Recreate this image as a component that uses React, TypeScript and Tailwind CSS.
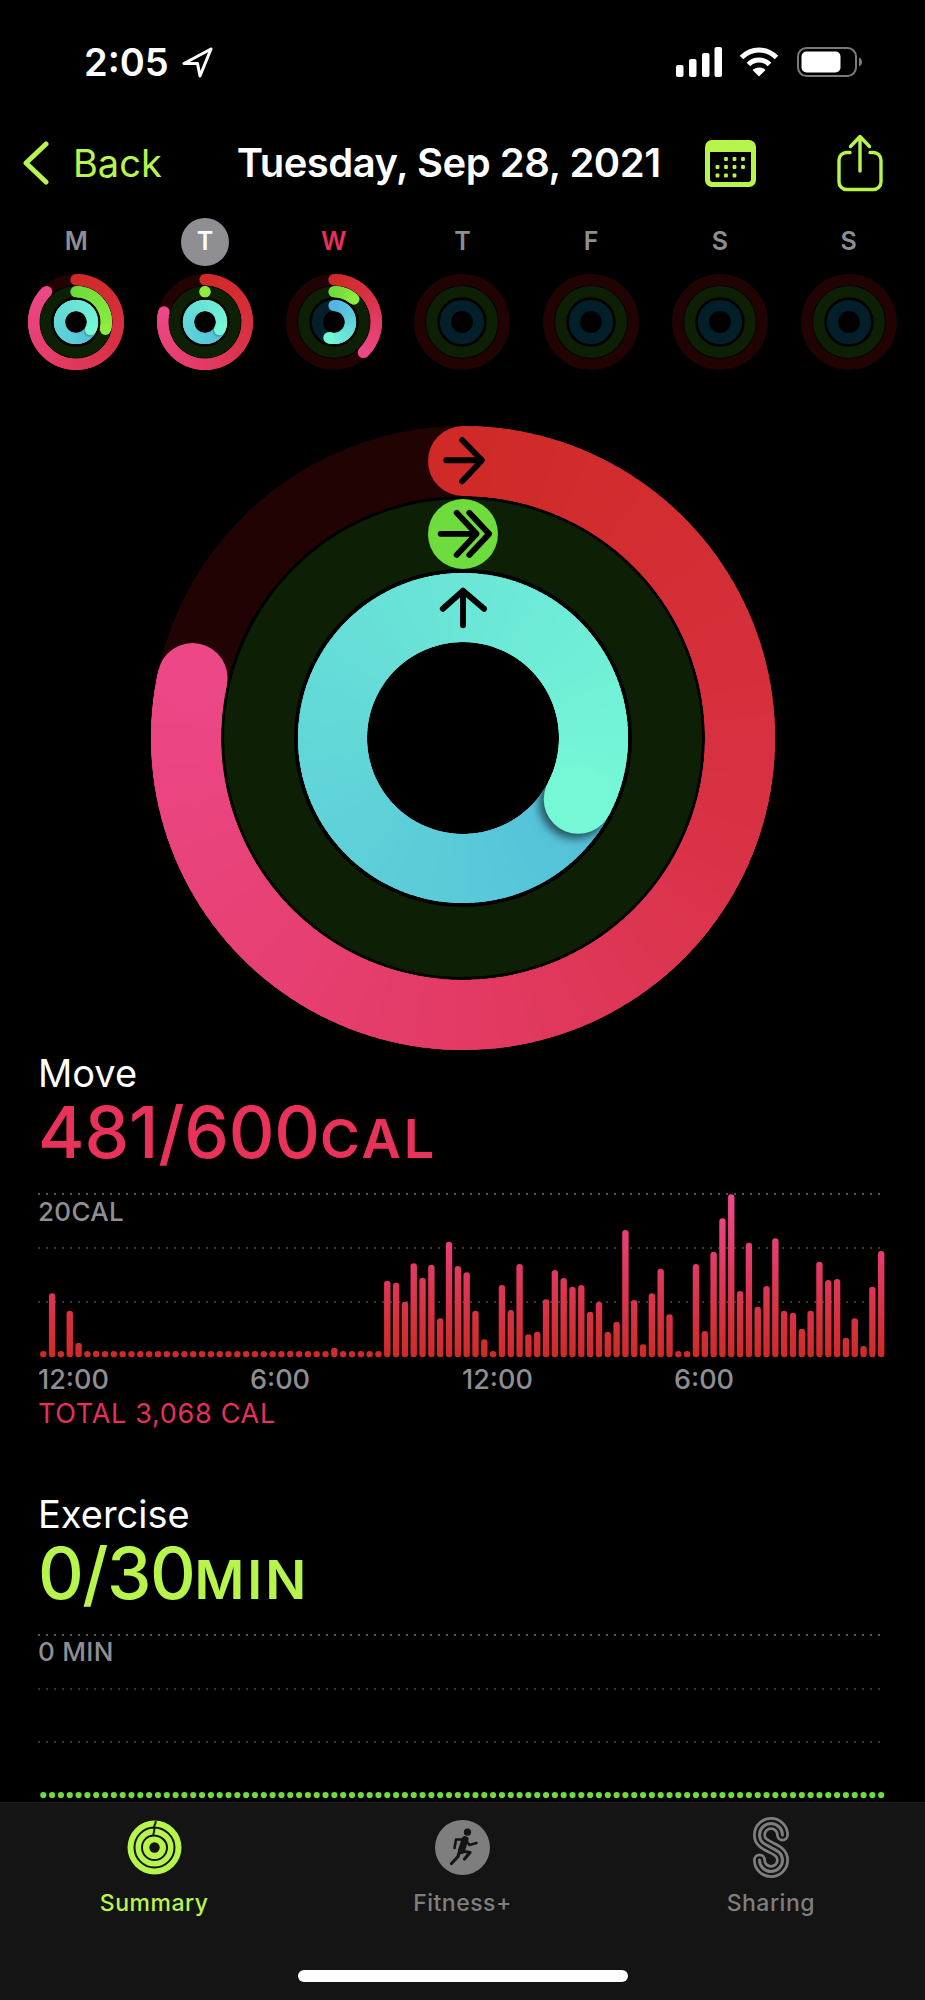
import React from 'react';

type Stop = [number, string];

const RED: Stop[] = [[0, '#cf2a27'], [0.4, '#d93246'], [0.65, '#e33b66'], [1, '#ec4888']];
const GREEN: Stop[] = [[0, '#6fdc3e'], [1, '#8cec40']];
const BLUE: Stop[] = [[0, '#54c0d9'], [1, '#76f8d6']];
const BLUE_SHORT: Stop[] = [[0, '#55b5e0'], [1, '#72f7d6']];

const hex = (c: string) => [1, 3, 5].map(i => parseInt(c.slice(i, i + 2), 16));

const mix = (stops: Stop[], t: number) => {
    for (let i = 1; i < stops.length; i++) {
        if (t <= stops[i][0]) {
            const k = (t - stops[i - 1][0]) / (stops[i][0] - stops[i - 1][0]);
            const a = hex(stops[i - 1][1]);
            const b = hex(stops[i][1]);
            return `rgb(${a.map((v, j) => Math.round(v + (b[j] - v) * k)).join(',')})`;
        }
    }
    return stops[stops.length - 1][1];
};

const polar = (c: number, r: number, deg: number) => {
    const a = ((deg - 90) * Math.PI) / 180;
    return [c + r * Math.cos(a), c + r * Math.sin(a)];
};

const Arc = ({ c, r, w, from, to, stops, shadowId, shadow = 0.6 }: { c: number; r: number; w: number; from: number; to: number; stops: Stop[]; shadowId?: string; shadow?: number }) => {
    const step = 2;
    const parts = [];
    const n = Math.max(1, Math.ceil((to - from) / step));
    for (let i = 0; i < n; i++) {
        const a = from + ((to - from) * i) / n;
        // overlap the next piece by a good margin, thin seams show the track on small rings
        const b = from + ((to - from) * (i + 1)) / n + 3;
        const [x1, y1] = polar(c, r, a);
        const [x2, y2] = polar(c, r, Math.min(b, to));
        parts.push(
            <path key={i} d={`M${x1} ${y1}A${r} ${r} 0 0 1 ${x2} ${y2}`} fill="none" stroke={mix(stops, i / n)} strokeWidth={w} />
        );
    }
    const [sx, sy] = polar(c, r, from);
    const [ex, ey] = polar(c, r, to);
    // the shadow only falls on the first lap, so the tail is painted after it
    const cut = Math.floor(n * 0.7);
    return (
        <g>
            {to - from <= 360 - 1 && <circle cx={sx} cy={sy} r={w / 2} fill={stops[0][1]} />}
            {parts.slice(0, cut)}
            {shadowId && (
                <g mask={`url(#${shadowId}m)`}>
                    <circle cx={ex - w * 0.04} cy={ey + w * 0.05} r={w / 2 + w * 0.02} fill="#000" opacity={shadow} filter={`url(#${shadowId})`} />
                </g>
            )}
            {parts.slice(cut)}
            <circle cx={ex} cy={ey} r={w / 2} fill={stops[stops.length - 1][1]} />
        </g>
    );
};

type RingSpec = { red?: number; green?: number; blue?: [number, number] };

const MiniRings = ({ id, red, green, blue }: RingSpec & { id: string }) => {
    const c = 48;
    const w = 11.2;
    return (
        <svg width={96} height={96} viewBox="0 0 96 96" className="block">
            <defs>
                <filter id={`${id}s`} x="-50%" y="-50%" width="200%" height="200%"><feGaussianBlur stdDeviation="0.8" /></filter>
                <mask id={`${id}sm`} maskUnits="userSpaceOnUse" x="0" y="0" width="96" height="96">
                    <circle cx={c} cy={c} r={16.5} fill="none" stroke="#fff" strokeWidth={w} />
                </mask>
            </defs>
            <circle cx={c} cy={c} r={42.3} fill="none" stroke="#220304" strokeWidth={w} />
            <circle cx={c} cy={c} r={30.3} fill="none" stroke="#0d1f05" strokeWidth={w} />
            <circle cx={c} cy={c} r={16.5} fill="none" stroke="#03202a" strokeWidth={w} />
            {red !== undefined && <Arc c={c} r={42.3} w={w} from={0} to={red} stops={RED} />}
            {green !== undefined && <Arc c={c} r={30.3} w={w} from={0} to={green} stops={GREEN} />}
            {blue && <Arc c={c} r={16.5} w={w} from={blue[0]} to={blue[1]} stops={blue[1] - blue[0] >= 360 ? BLUE : BLUE_SHORT} shadowId={blue[1] - blue[0] >= 360 ? `${id}s` : undefined} shadow={0.35} />}
        </svg>
    );
};

const BigRings = () => {
    const c = 312;
    return (
        <svg width={624} height={624} viewBox="0 0 624 624" className="block mx-auto">
            <defs>
                <filter id="bigs" x="-50%" y="-50%" width="200%" height="200%"><feGaussianBlur stdDeviation="5" /></filter>
                <mask id="bigsm" maskUnits="userSpaceOnUse" x="0" y="0" width="624" height="624">
                    <circle cx={c} cy={c} r={130.5} fill="none" stroke="#fff" strokeWidth={69} />
                </mask>
            </defs>
            <circle cx={c} cy={c} r={277} fill="none" stroke="#220304" strokeWidth={70} />
            <circle cx={c} cy={c} r={204} fill="none" stroke="#0d1f05" strokeWidth={70} />
            <Arc c={c} r={277} w={70} from={0} to={282.5} stops={RED} />
            <circle cx={c} cy={c - 204} r={35} fill="#6fdc3e" />
            <Arc c={c} r={130.5} w={69} from={118} to={478} stops={BLUE} shadowId="bigs" />
            <g transform="translate(312 312) scale(.4209) translate(-790 -780)" fill="none" stroke="#000" strokeWidth="14" strokeLinecap="round" strokeLinejoin="round">
                <path d="M750 120H833M788 72L835 120L788 170" />
                <path d="M737 295H815M775 245L822 295L775 345M805 245L852 295L805 345" />
                <path d="M790 512V430M742 473L790 430L840 473" />
            </g>
        </svg>
    );
};

const CAL_TOPS = [
    483, 310, 483, 362, 458, 483, 482, 483, 483, 483, 483, 483, 483, 483, 483, 483,
    483, 483, 483, 483, 483, 483, 483, 483, 483, 483, 483, 483, 482, 483, 483, 483,
    483, 473, 483, 483, 483, 483, 483, 272, 278, 335, 220, 263, 224, 385, 155, 228,
    247, 362, 448, 483, 285, 360, 222, 433, 425, 328, 240, 264, 290, 285, 365, 335,
    425, 395, 120, 330, 463, 310, 236, 373, 483, 483, 222, 423, 185, 85, 13, 303,
    158, 350, 288, 145, 362, 368, 416, 362, 215, 270, 267, 443, 385, 468, 290, 183,
];

const GridLines = ({ ys }: { ys: number[] }) => (
    <>
        {ys.map((y, i) => (
            <line key={y} x1={1} x2={848} y1={y} y2={y} stroke={i === 0 ? '#6e6e6e' : '#454545'} strokeWidth={2} strokeLinecap="round" strokeDasharray="0.1 7.9" />
        ))}
    </>
);

const MoveChart = () => (
    <svg width={848} height={170} viewBox="0 0 848 170" className="block">
        <defs>
            <linearGradient id="bars" gradientUnits="userSpaceOnUse" x1="0" y1="4" x2="0" y2="167">
                <stop offset="0" stopColor="#ee4a90" />
                <stop offset="0.45" stopColor="#e13a62" />
                <stop offset="1" stopColor="#cf2a27" />
            </linearGradient>
        </defs>
        <GridLines ys={[4, 58, 112]} />
        {CAL_TOPS.map((top, i) => (
            <rect key={i} x={5.3 + 8.82 * i - 3.2} y={top / 3} width={6.4} height={167.3 - top / 3} rx={3.2} fill="url(#bars)" />
        ))}
    </svg>
);

const ExerciseChart = () => (
    <svg width={848} height={171} viewBox="0 0 848 171" className="block">
        <GridLines ys={[4, 58, 111]} />
        {CAL_TOPS.map((_, i) => (
            <circle key={i} cx={5.3 + 8.82 * i} cy={164} r={3.1} fill="#6fdc3e" />
        ))}
    </svg>
);

const StatusIcons = () => (
    <div className="flex items-center">
        <svg width={46} height={30} viewBox="0 0 46 30" fill="#fff">
            <rect x="0" y="18" width="7.5" height="12" rx="2" />
            <rect x="13" y="12" width="7.5" height="18" rx="2" />
            <rect x="26" y="6" width="7.5" height="24" rx="2" />
            <rect x="38.5" y="0" width="7.5" height="30" rx="2" />
        </svg>
        <svg width={40} height={30} viewBox="0 0 40 30" className="ml-[17px]" fill="none" stroke="#fff" strokeWidth="5">
            <path d="M2.5 10.5C12.5 .5 27.5 .5 37.5 10.5" />
            <path d="M9.5 17.5C15 11.5 25 11.5 30.5 17.5" />
            <path d="M20 29.5L13.5 23C17 19.5 23 19.5 26.5 23Z" fill="#fff" stroke="none" />
        </svg>
        <svg width={66} height={30} viewBox="0 0 66 30" className="ml-[18px]">
            <rect x="1" y="1" width="58" height="28" rx="8.5" fill="none" stroke="#7a7a7a" strokeWidth="2" />
            <rect x="4.5" y="4.5" width="39" height="21" rx="5" fill="#fff" />
            <path d="M62 10.5C64 11 65 13 65 15S64 19 62 19.5Z" fill="#7a7a7a" />
        </svg>
    </div>
);

const CalendarIcon = () => (
    <svg width={51} height={47} viewBox="0 0 51 47" fill="#b8f54c">
        <path fillRule="evenodd" d="M7 0H44A7 7 0 0 1 51 7V40A7 7 0 0 1 44 47H7A7 7 0 0 1 0 40V7A7 7 0 0 1 7 0ZM5 12H46V39A3 3 0 0 1 43 42H8A3 3 0 0 1 5 39Z" />
        {[[21, 19], [29.5, 19], [38, 19], [12.5, 27], [21, 27], [29.5, 27], [38, 27], [12.5, 35.5], [21, 35.5], [29.5, 35.5]].map(([x, y]) => (
            <rect key={`${x}-${y}`} x={x - 1.9} y={y - 1.9} width={3.8} height={3.8} rx={0.8} />
        ))}
    </svg>
);

const ShareIcon = () => (
    <svg width={46} height={58} viewBox="0 0 46 58" fill="none" stroke="#b8f54c" strokeWidth="3.4" strokeLinecap="round" strokeLinejoin="round">
        <path d="M13 18.5H9.5A7.5 7.5 0 0 0 2 26V48A7.5 7.5 0 0 0 9.5 55.5H36.5A7.5 7.5 0 0 0 44 48V26A7.5 7.5 0 0 0 36.5 18.5H33" />
        <path d="M23 37V3M13.5 12.5L23 2.5L32.5 12.5" />
    </svg>
);

const SummaryIcon = () => (
    <svg width={55} height={61} viewBox="0 0 55 61">
        <circle cx="27.5" cy="30.5" r="27" fill="#b8f54c" />
        <circle cx="27.5" cy="30.5" r="5.2" fill="#141414" />
        <path d="M28.5 4C29.5 7 26.5 8 27 10.5C38 10.5 47.5 19.5 47.5 30.5C47.5 41.5 38.5 50.5 27.5 50.5C16.5 50.5 7.5 41.5 7.5 30.5C7.5 19.5 16.5 10.5 27 10.5C28.5 13 26 15 26.5 18.5C33.5 18.5 40 23.5 40 30.5C40 37.5 34.5 43 27.5 43C20.5 43 15 37.5 15 30.5C15 23.5 20.5 18.5 26.5 18.5" fill="none" stroke="#141414" strokeWidth="2" />
    </svg>
);

const FitnessIcon = () => (
    <svg width={55} height={61} viewBox="0 0 55 61">
        <circle cx="27.5" cy="30.5" r="27.5" fill="#7e7e7e" />
        <g transform="translate(0 3)" fill="none" stroke="#141414" strokeLinecap="round" strokeLinejoin="round">
            <circle cx="32.5" cy="12.2" r="3.6" fill="#141414" stroke="none" />
            <path d="M30 19.5L26.5 30.5" strokeWidth="7" />
            <path d="M28.5 19.5H21L19.5 28M31 20.5L34.5 25L41.5 23" strokeWidth="2.6" />
            <path d="M26.5 31L35 32.5L29.5 39M25 30L23 36.5L16.5 43.5" strokeWidth="3.2" />
        </g>
    </svg>
);

const SharingIcon = () => {
    const d = 'M29.5 18A11.5 11.5 0 0 0 6.5 18C6.5 25 12 27.5 18 30.5S29.5 36 29.5 43A11.5 11.5 0 0 1 6.5 43';
    return (
        <svg width={36} height={61} viewBox="0 0 36 61" fill="none" strokeLinecap="round">
            <path d={d} stroke="#7e7e7e" strokeWidth="13" />
            <path d={d} stroke="#141414" strokeWidth="7.5" />
            <path d={d} stroke="#7e7e7e" strokeWidth="3" />
        </svg>
    );
};

const DAYS: { label: string; color?: string; today?: boolean; rings: RingSpec }[] = [
    { label: 'M', rings: { red: 316, green: 104, blue: [118, 478] } },
    { label: 'T', today: true, rings: { red: 284, green: 0, blue: [118, 478] } },
    { label: 'W', color: 'text-[#e5305a]', rings: { red: 136, green: 41, blue: [0, 198] } },
    { label: 'T', rings: {} },
    { label: 'F', rings: {} },
    { label: 'S', rings: {} },
    { label: 'S', rings: {} },
];

const App = () => (
    <div className="h-[2000px] bg-black text-white flex flex-col overflow-hidden font-['Inter',sans-serif]">
        <div className="h-[124px] shrink-0 flex items-center justify-between pl-[84px] pr-[62px]">
            <div className="flex items-center gap-[13px]">
                <span className="text-[38px] font-semibold leading-none">2:05</span>
                <svg width={31} height={31} viewBox="0 0 31 31" fill="none" stroke="#fff" strokeWidth="3" strokeLinejoin="round">
                    <path d="M29 2L2 16.5H15.5L18 29Z" />
                </svg>
            </div>
            <StatusIcons />
        </div>

        <div className="h-[94px] shrink-0 pb-[16px] flex items-center pl-[23px] pr-[42px]">
            <svg width={26} height={44} viewBox="0 0 26 44" fill="none" stroke="#b8f54c" strokeWidth="5" strokeLinecap="round" strokeLinejoin="round">
                <path d="M23 3L3 22L23 41" />
            </svg>
            <span className="ml-[24px] text-[38px] leading-none text-[#b8f54c]">Back</span>
            <span className="ml-[75px] text-[40px] font-semibold leading-none tracking-[-0.5px] whitespace-nowrap">Tuesday, Sep 28, 2021</span>
            <div className="ml-auto flex items-center gap-[81px]">
                <CalendarIcon />
                <ShareIcon />
            </div>
        </div>

        <div className="shrink-0 grid grid-cols-7 px-[12px]">
            {DAYS.map((day, i) => (
                <div key={i} className="flex flex-col items-center">
                    <div className={`w-[48px] h-[48px] rounded-full flex items-center justify-center text-[25px] font-semibold ${day.today ? 'bg-[#8e8e93] text-white' : day.color || 'text-[#8e8e93]'}`}>
                        {day.label}
                    </div>
                    <div className="mt-[8px]">
                        <MiniRings id={`ring${i}`} {...day.rings} />
                    </div>
                </div>
            ))}
        </div>

        <div className="shrink-0 mt-[56px]">
            <BigRings />
        </div>

        <div className="shrink-0 pl-[38px]">
            <div className="h-[46px] flex items-center text-[38px] leading-none">Move</div>
            <div className="h-[72px] flex items-baseline text-[#e8325a] font-medium leading-[72px]">
                <span className="text-[71px] tracking-[-0.2px]">481/600</span>
                <span className="text-[54px] font-semibold tracking-[3px]">CAL</span>
            </div>
            <div className="relative mt-[22px]">
                <MoveChart />
                <span className="absolute left-0 top-[9px] text-[26px] leading-[26px] font-medium tracking-[0.3px] text-[#8e8e93]">20CAL</span>
            </div>
            <div className="w-[848px] grid grid-cols-4 h-[38px] items-center text-[27px] font-medium text-[#8e8e93]">
                <span>12:00</span>
                <span>6:00</span>
                <span>12:00</span>
                <span>6:00</span>
            </div>
            <div className="h-[32px] flex items-center text-[27px] text-[#e5305a] tracking-[0.7px]">TOTAL 3,068 CAL</div>

            <div className="mt-[61px] h-[46px] flex items-center text-[38px] leading-none">Exercise</div>
            <div className="h-[72px] flex items-baseline text-[#b8f54c] font-medium leading-[72px]">
                <span className="text-[71px] tracking-[-1.5px]">0/30</span>
                <span className="text-[54px] font-semibold tracking-[3px]">MIN</span>
            </div>
            <div className="relative mt-[22px]">
                <ExerciseChart />
                <span className="absolute left-0 top-[8px] text-[26px] leading-[26px] font-medium tracking-[0.3px] text-[#8e8e93]">0 MIN</span>
            </div>
        </div>

        <div className="flex-1 bg-[#141414] border-t border-[#1c1c1c] flex flex-col">
            <div className="grid grid-cols-3 pt-[14px]">
                <div className="flex flex-col items-center">
                    <SummaryIcon />
                    <span className="mt-[10px] text-[23px] leading-[30px] font-medium tracking-[0.5px] text-[#b8f54c]">Summary</span>
                </div>
                <div className="flex flex-col items-center">
                    <FitnessIcon />
                    <span className="mt-[10px] text-[23px] leading-[30px] font-medium tracking-[0.5px] text-[#7e7e7e]">Fitness+</span>
                </div>
                <div className="flex flex-col items-center">
                    <SharingIcon />
                    <span className="mt-[10px] text-[23px] leading-[30px] font-medium tracking-[0.5px] text-[#7e7e7e]">Sharing</span>
                </div>
            </div>
            <div className="mt-[52px] mx-auto w-[330px] h-[12px] rounded-full bg-white" />
        </div>
    </div>
);

export default App;
